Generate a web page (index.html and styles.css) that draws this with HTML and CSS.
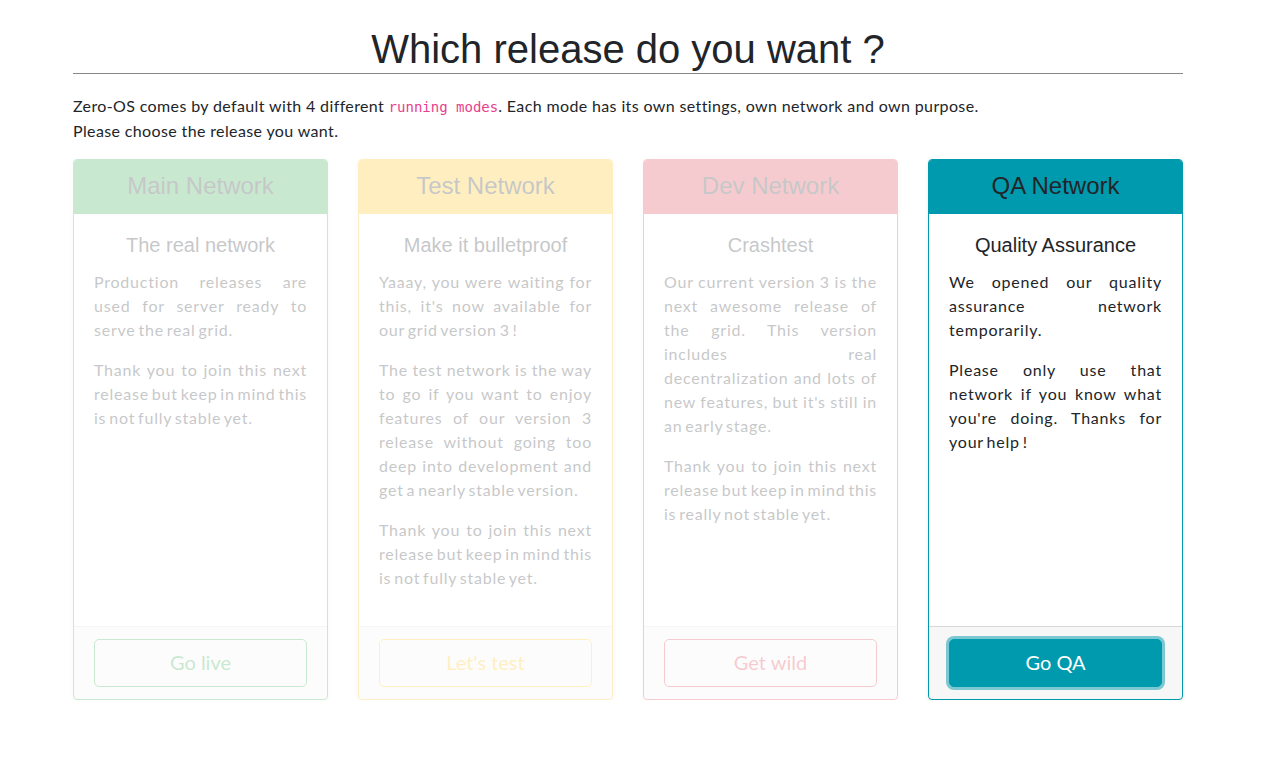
FILE: index.html
```html
<!DOCTYPE html>
<html lang="en">
<head>
<meta charset="utf-8">
<title>Which release do you want ?</title>
<link rel="stylesheet" href="styles.css">
</head>
<body>
<div class="container">
  <h1 class="title">Which release do you want ?</h1>
  <p class="intro">Zero-OS comes by default with 4 different <code>running modes</code>. Each mode has its own settings, own network and own purpose.<br>Please choose the release you want.</p>
  <div class="cards">
    <div class="card card-main faded">
      <div class="card-header">Main Network</div>
      <div class="card-body">
        <h5 class="card-title">The real network</h5>
        <p class="card-text">Production releases are used for server ready to serve the real grid.</p>
        <p class="card-text">Thank you to join this next release but keep in mind this is not fully stable yet.</p>
      </div>
      <div class="card-footer"><button class="btn">Go live</button></div>
    </div>
    <div class="card card-test faded">
      <div class="card-header">Test Network</div>
      <div class="card-body">
        <h5 class="card-title">Make it bulletproof</h5>
        <p class="card-text">Yaaay, you were waiting for this, it's now available for our grid version 3 !</p>
        <p class="card-text">The test network is the way to go if you want to enjoy features of our version 3 release without going too deep into development and get a nearly stable version.</p>
        <p class="card-text">Thank you to join this next release but keep in mind this is not fully stable yet.</p>
      </div>
      <div class="card-footer"><button class="btn">Let's test</button></div>
    </div>
    <div class="card card-dev faded">
      <div class="card-header">Dev Network</div>
      <div class="card-body">
        <h5 class="card-title">Crashtest</h5>
        <p class="card-text">Our current version 3 is the next awesome release of the grid. This version includes real decentralization and lots of new features, but it's still in an early stage.</p>
        <p class="card-text">Thank you to join this next release but keep in mind this is really not stable yet.</p>
      </div>
      <div class="card-footer"><button class="btn">Get wild</button></div>
    </div>
    <div class="card card-qa active">
      <div class="card-header">QA Network</div>
      <div class="card-body">
        <h5 class="card-title">Quality Assurance</h5>
        <p class="card-text">We opened our quality assurance network temporarily.</p>
        <p class="card-text">Please only use that network if you know what you're doing. Thanks for your help !</p>
      </div>
      <div class="card-footer"><button class="btn">Go QA</button></div>
    </div>
  </div>
</div>
</body>
</html>
```

FILE: styles.css
```css
* { box-sizing: border-box; }
html, body { margin: 0; padding: 0; background: #fff; }
body {
  font-family: "Lato", "Noto Sans", sans-serif;
  font-size: 16px;
  color: #212529;
}
.container {
  width: 1110px;
  margin: 0 0 0 73px;
  padding-top: 25px;
}
.title {
  font-family: "Liberation Sans", Arial, sans-serif;
  font-weight: 400;
  font-size: 40px;
  line-height: 48px;
  margin: 0;
  text-align: center;
  border-bottom: 1px solid #888;
  color: #212529;
}
.intro {
  margin: 19px 0 16px;
  line-height: 25px;
  letter-spacing: 0.37px;
}
.intro code {
  font-family: "DejaVu Sans Mono", "Liberation Mono", monospace;
  font-size: 14px;
  line-height: 1;
  letter-spacing: 0;
  color: #e83e8c;
}
.cards {
  display: flex;
  gap: 30px;
  align-items: stretch;
}
.card {
  flex: 0 0 255px;
  display: flex;
  flex-direction: column;
  border: 1px solid;
  border-radius: 4px;
  background: #fff;
  box-shadow: 0 2px 4px rgba(0,0,0,.075);
  overflow: hidden;
}
.faded { opacity: .25; }
.card-header {
  font-family: "Liberation Sans", Arial, sans-serif;
  font-size: 24px;
  line-height: 29px;
  padding: 11px 20px 13px;
  text-align: center;
  color: #212529;
  border-bottom: 1px solid rgba(0,0,0,.125);
}
.card-body {
  flex: 1 1 auto;
  padding: 20px;
}
.card-title {
  font-family: "Liberation Sans", Arial, sans-serif;
  font-weight: 400;
  font-size: 20px;
  line-height: 24px;
  margin: -1px 0 13px;
  text-align: center;
}
.card-text {
  margin: 0 0 16px;
  line-height: 24px;
  text-align: justify;
  letter-spacing: 0.783px;
  word-spacing: -2px;
}
.card-footer {
  padding: 12px 20px;
  background: rgba(0,0,0,.03);
  border-top: 1px solid rgba(0,0,0,.125);
}
.btn {
  display: block;
  width: 100%;
  height: 48px;
  padding: 0 0 2px;
  font-family: "Lato", sans-serif;
  font-size: 20px;
  border: 1px solid;
  border-radius: 5px;
  background: transparent;
}
.card-main { border-color: #28a745; }
.card-main .card-header { background: #28a745; border-bottom-color: #28a745; }
.card-main .btn { color: #28a745; border-color: #28a745; }
.card-test { border-color: #ffc107; }
.card-test .card-header { background: #ffc107; border-bottom-color: #ffc107; }
.card-test .btn { color: #ffc107; border-color: #ffc107; }
.card-dev { border-color: #dc3545; }
.card-dev .card-header { background: #dc3545; border-bottom-color: #dc3545; }
.card-dev .btn { color: #dc3545; border-color: #dc3545; }
.card-qa { border-color: #009aae; }
.card-qa .card-header { background: #009aae; border-bottom-color: #009aae; }
.card-qa .btn {
  color: #fff;
  background: #009aae;
  border-color: #009aae;
  box-shadow: 0 0 0 3px rgba(0,154,174,.5);
}
```
